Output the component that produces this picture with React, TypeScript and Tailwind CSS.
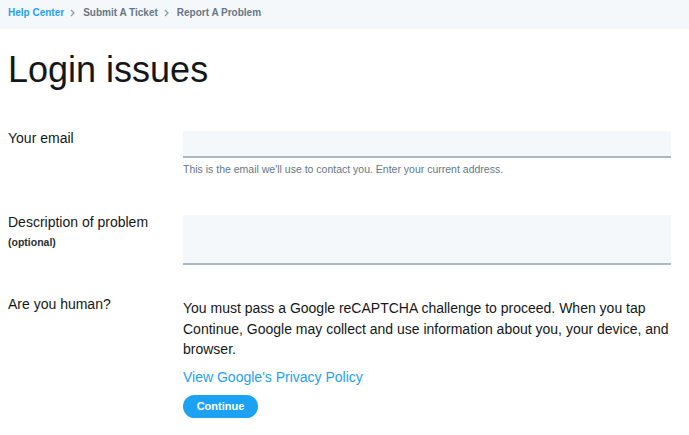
import React from 'react';

const crumbs = ['Help Center', 'Submit A Ticket', 'Report A Problem'];

const Chevron: React.FC = () => (
  <svg width="5" height="8" viewBox="0 0 5 8" className="ml-[6px] mr-[8px] shrink-0">
    <path d="M1 1l3 3-3 3" fill="none" stroke="#8899a6" strokeWidth="1.3" />
  </svg>
);

const App: React.FC = () => {
  return (
    <div className="min-h-[435px] bg-white font-['Liberation_Sans',Arial,sans-serif] text-[#14171a]">
      {/* Breadcrumbs */}
      <nav className="h-[29px] bg-[#f5f8fa] px-2 pt-[6px]">
        <ol className="flex items-center text-[10px] font-bold leading-[14px]">
          {crumbs.map((c, i) => (
            <li key={c} className="flex items-center">
              <a href="#" className={i === 0 ? 'text-[#1da1f2]' : 'text-[#657786]'}>
                {c}
              </a>
              {i < crumbs.length - 1 && <Chevron />}
            </li>
          ))}
        </ol>
      </nav>

      <main className="pl-2 pr-[18px]">
        <h1 className="mt-[21px] text-[36px] font-normal leading-[40px]">Login issues</h1>

        <form onSubmit={(e) => e.preventDefault()} className="mt-[41px]">
          {/* Email */}
          <div className="flex items-start">
            <label className="w-[175px] shrink-0 text-[14px] leading-[14px]">Your email</label>
            <div className="flex-1">
              <input
                type="email"
                className="block h-[27px] w-full border-b-2 border-[#aab8c2] bg-[#f5f8fa] px-2 text-[14px] outline-none"
              />
              <p className="mt-[4px] text-[10.5px] leading-[14px] text-[#657786]">
                This is the email we'll use to contact you. Enter your current address.
              </p>
            </div>
          </div>

          {/* Description */}
          <div className="mt-[39px] flex items-start">
            <div className="w-[175px] shrink-0">
              <label className="block text-[14px] leading-[14px]">Description of problem</label>
              <span className="mt-[6px] block text-[10.5px] font-bold leading-[14px] text-[#292f33]">(optional)</span>
            </div>
            <textarea className="block h-[50px] flex-1 resize-none border-b-2 border-[#aab8c2] bg-[#f5f8fa] px-2 py-1 text-[14px] outline-none" />
          </div>

          {/* Captcha */}
          <div className="mt-[32px] flex items-start">
            <div className="w-[175px] shrink-0 text-[14px] leading-[14px]">Are you human?</div>
            <div className="flex-1">
              <p className="mt-[1px] text-[14px] leading-[20.5px]">
                You must pass a Google reCAPTCHA challenge to proceed. When you tap Continue, Google may
                collect and use information about you, your device, and browser.
              </p>
              <a href="#" className="mt-[7px] block text-[14px] leading-[20px] text-[#1da1f2]">
                View Google's Privacy Policy
              </a>
              <button
                type="submit"
                className="mt-[8px] flex h-[23px] w-[75px] items-center justify-center rounded-full bg-[#1da1f2] text-[11px] font-bold text-white"
              >
                Continue
              </button>
            </div>
          </div>
        </form>
      </main>
    </div>
  );
};

export default App;
